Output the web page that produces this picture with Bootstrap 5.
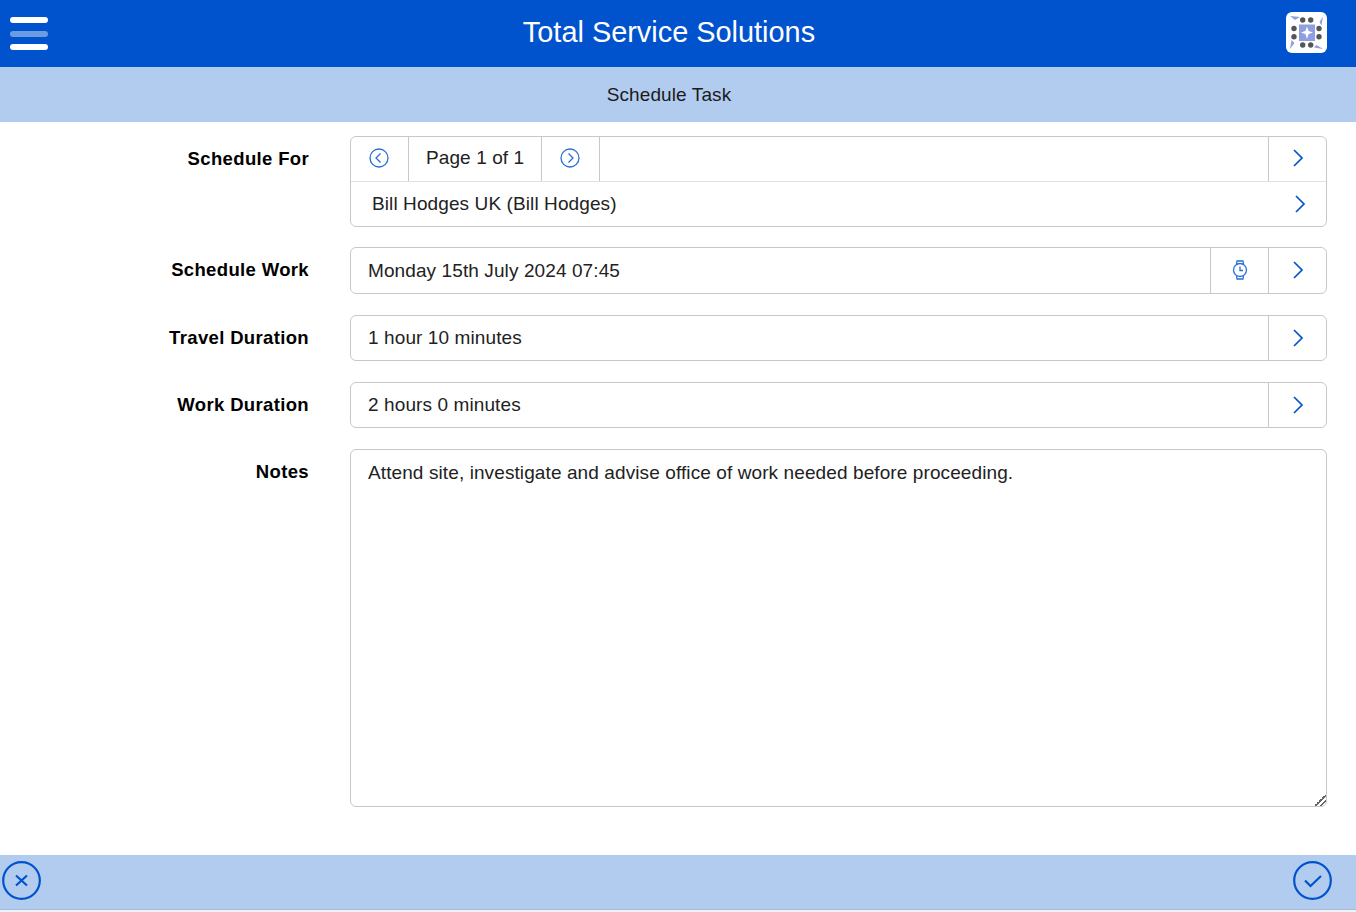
<!DOCTYPE html>
<html lang="en">
<head>
<meta charset="utf-8">
<title>Schedule Task</title>
<link rel="stylesheet" href="https://cdn.jsdelivr.net/npm/bootstrap@5.3.0/dist/css/bootstrap.min.css">
<style>
html,body{height:912px;overflow:hidden}
body{font-family:"Liberation Sans",Arial,sans-serif;font-size:19px;letter-spacing:.1px;color:#222;background:#fff}
.app-top{height:67px;background:#0053cd;padding:0 29px 0 10px}
.app-title{font-size:28.9px;letter-spacing:0;color:#fff;line-height:1;margin:-2px 0 0 4px}
.burger{width:38px;height:33px;flex-direction:column;justify-content:space-between;display:flex}
.burger i{display:block;height:6px;border-radius:3px;background:#fff}
.burger i.dim{background:#6b9be3}
.logo-box{width:41px;height:41px;background:#fff;border-radius:6px;display:block;margin-top:-2px}
.sub-bar{height:55px;background:#b2ccf0;color:#1b1b1b;padding:2px 18px 0 0}
.form-area{padding:14px 29px 0 0;height:733px}
.lbl{width:309px;flex:none;text-align:right;font-weight:700;color:#000;font-size:18.5px;letter-spacing:.35px;line-height:22px;padding-top:12px}
.fld{margin-left:41px;flex:1;min-width:0}
.frame{border:1px solid #c8c8c8;border-radius:6px;background:#fff}
.cellx{width:58px;flex:none;border-left:1px solid #c8c8c8}
.cellp{border-right:1px solid #c8c8c8}
.cell-page{padding:0 17px 2px 17px}
.val{padding-left:17px;padding-top:1px;color:#222}
.ico{display:block;color:#0053cd}
.nudge-up{margin-bottom:2px}
.nudge-left{margin-right:2px}
.row-a{height:45px}
.row-b{height:44.4px;padding:0 20px 0 21px}
.row-c{height:46.33px}
.note-box{display:block;width:100%;height:358px;border:1px solid #c8c8c8;border-radius:6px;padding:11px 17px;font:inherit;letter-spacing:.1px;color:#222;line-height:24px;outline:0}
.note-box::-webkit-resizer{background:linear-gradient(135deg,transparent 60%,#666 60%,#666 67%,transparent 67%,transparent 78%,#666 78%,#666 85%,transparent 85%)}
.app-foot{height:48px;background:#b2ccf0;padding:6px 24px 0 2px;border-bottom:1px solid #a9b9cf;box-sizing:content-box}
.foot-rest{height:2px;background:#edf3fb}
.gap-first{margin-bottom:20px}
.gap-rest{margin-bottom:21px}
</style>
</head>
<body>
<header class="app-top d-flex align-items-center justify-content-between">
  <div class="burger"><i></i><i class="dim"></i><i></i></div>
  <div class="app-title">Total Service Solutions</div>
  <svg class="logo-box" viewBox="0 0 41 41">
    <rect x="13" y="12.500" width="16" height="16.500" fill="#8f9fe0"/>
    <path d="M21 14.500l1.600 4.400 4.400 1.600-4.400 1.600-1.600 4.900-1.600-4.900-4.400-1.600 4.400-1.600z" fill="#fff"/>
    <g fill="#555"><circle cx="16.700" cy="8" r="2.700"/><circle cx="24.700" cy="8" r="2.700"/><circle cx="16.700" cy="33" r="2.700"/><circle cx="24.700" cy="33" r="2.700"/><circle cx="8" cy="16.500" r="2.700"/><circle cx="8" cy="24.700" r="2.700"/><circle cx="33" cy="16.500" r="2.700"/><circle cx="33" cy="24.700" r="2.700"/></g>
    <g fill="#8f9fe0"><path d="M4 4l10 1-5 3z"/><path d="M37 4.500l-1.500 9-2-3.500z"/><path d="M37 37l-9-1.500 2.500-2.500z"/><path d="M4 37l1.500-9 3 3z"/></g>
  </svg>
</header>
<div class="sub-bar d-flex align-items-center justify-content-center">Schedule Task</div>
<main class="form-area">
  <div class="d-flex gap-first">
    <div class="lbl">Schedule For</div>
    <div class="fld frame">
      <div class="d-flex align-items-stretch row-a border-bottom">
        <div class="cellx cellp d-flex align-items-center justify-content-center border-start-0">
          <svg class="ico nudge-up nudge-left" width="20" height="20" viewBox="0 0 20 20" fill="none" stroke="#2a6fd8" stroke-width="1.300"><circle cx="10" cy="10" r="9"/><path d="M11.500 5.500L7 10l4.500 4.500"/></svg>
        </div>
        <div class="cellp d-flex align-items-center justify-content-center cell-page">Page 1 of 1</div>
        <div class="cellx cellp d-flex align-items-center justify-content-center border-start-0">
          <svg class="ico nudge-up nudge-left" width="20" height="20" viewBox="0 0 20 20" fill="none" stroke="#2a6fd8" stroke-width="1.300"><circle cx="10" cy="10" r="9"/><path d="M8.500 5.500L13 10l-4.500 4.500"/></svg>
        </div>
        <div class="flex-grow-1"></div>
        <div class="cellx d-flex align-items-center justify-content-center">
          <svg class="ico nudge-up" width="12" height="18" viewBox="0 0 12 18" fill="none" stroke="#0053cd" stroke-width="1.700"><path d="M2 1L10 9 2 17"/></svg>
        </div>
      </div>
      <div class="d-flex align-items-center row-b justify-content-between">
        <span>Bill Hodges UK (Bill Hodges)</span>
        <svg class="ico" width="12" height="18" viewBox="0 0 12 18" fill="none" stroke="#0053cd" stroke-width="1.700"><path d="M2 1L10 9 2 17"/></svg>
      </div>
    </div>
  </div>
  <div class="d-flex gap-rest">
    <div class="lbl">Schedule Work</div>
    <div class="fld frame d-flex align-items-stretch row-c">
      <div class="val flex-grow-1 d-flex align-items-center">Monday 15th July 2024 07:45</div>
      <div class="cellx d-flex align-items-center justify-content-center">
        <svg class="ico nudge-up" width="16" height="20" viewBox="0 0 16 20" fill="none" stroke="#2a6fd8" stroke-width="1.300"><circle cx="8" cy="10" r="6.500"/><path d="M4.500 4.500L5 1h6l.5 3.500M4.500 15.500L5 19h6l.5-3.500M8 6.500V10.500H11"/></svg>
      </div>
      <div class="cellx d-flex align-items-center justify-content-center">
        <svg class="ico nudge-up" width="12" height="18" viewBox="0 0 12 18" fill="none" stroke="#0053cd" stroke-width="1.700"><path d="M2 1L10 9 2 17"/></svg>
      </div>
    </div>
  </div>
  <div class="d-flex gap-rest">
    <div class="lbl">Travel Duration</div>
    <div class="fld frame d-flex align-items-stretch row-c">
      <div class="val flex-grow-1 d-flex align-items-center">1 hour 10 minutes</div>
      <div class="cellx d-flex align-items-center justify-content-center">
        <svg class="ico" width="12" height="18" viewBox="0 0 12 18" fill="none" stroke="#0053cd" stroke-width="1.700"><path d="M2 1L10 9 2 17"/></svg>
      </div>
    </div>
  </div>
  <div class="d-flex gap-rest">
    <div class="lbl">Work Duration</div>
    <div class="fld frame d-flex align-items-stretch row-c">
      <div class="val flex-grow-1 d-flex align-items-center">2 hours 0 minutes</div>
      <div class="cellx d-flex align-items-center justify-content-center">
        <svg class="ico" width="12" height="18" viewBox="0 0 12 18" fill="none" stroke="#0053cd" stroke-width="1.700"><path d="M2 1L10 9 2 17"/></svg>
      </div>
    </div>
  </div>
  <div class="d-flex">
    <div class="lbl">Notes</div>
    <div class="fld"><textarea class="note-box">Attend site, investigate and advise office of work needed before proceeding.</textarea></div>
  </div>
</main>
<footer class="app-foot d-flex align-items-start justify-content-between">
  <svg width="39" height="39" viewBox="0 0 39 39" fill="none" stroke="#0053cd" stroke-width="2.200"><circle cx="19.500" cy="19.500" r="18.300"/><path d="M14 14.500l11 10M25 14.500l-11 10"/></svg>
  <svg width="39" height="39" viewBox="0 0 39 39" fill="none" stroke="#0053cd" stroke-width="2.200"><circle cx="19.500" cy="19.500" r="18.300"/><path d="M12 19.500l5.500 5.500L28 15"/></svg>
</footer>
<div class="foot-rest"></div>
</body>
</html>
